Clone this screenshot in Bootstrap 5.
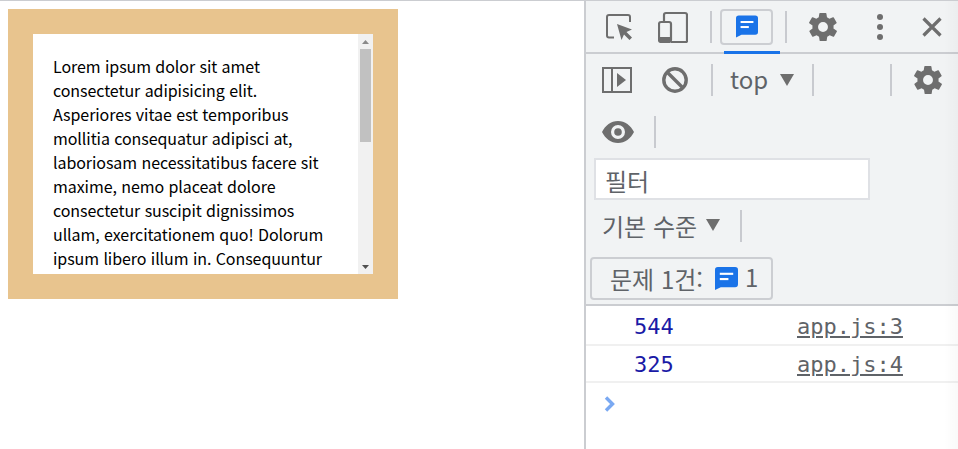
<!DOCTYPE html>
<html lang="ko">
<head>
<meta charset="utf-8">
<title>Console</title>
<link href="https://cdn.jsdelivr.net/npm/bootstrap@5.3.0/dist/css/bootstrap.min.css" rel="stylesheet">
<style>
html,body{height:449px;overflow:hidden;background:#fff}
.shell{height:449px;border-top:1px solid #cbcdd1}
.stage{width:584px;padding:8px 0 0 8px}
.outerbox{width:390px;height:290px;background:#e8c48e;padding:25px}
.innerbox{height:240px;background:#fff;overflow:hidden}
.lorem{width:325px;padding:20px 20px 0;font:16px/24px "Noto Sans CJK KR",sans-serif;letter-spacing:-.07px;color:#000;margin:0;flex:none}
.fakebar{width:15px;background:#f1f1f1;flex:none}
.bartop,.barbot{height:15px;color:#6e6e6e}
.barthumb{height:93px;background:#c1c1c1;margin:0 2px}
.dev{width:374px;border-left:2px solid #cbcdd1;background:#fff;font-family:"Noto Sans CJK KR",sans-serif;font-size:24px;color:#5f6368;position:relative}
.dev svg{display:block;flex:none}
.upper{background:#f1f3f4;height:303px;border-bottom:2px solid #cbcdd1;box-sizing:content-box}
.tb1{height:51px;border-bottom:2px solid #cbcdd1;position:relative;box-sizing:content-box;padding-left:20px}
.tb2{height:52px;padding-left:16px}
.tb3{height:52px;padding-left:16px}
.vsep{width:2px;height:32px;background:#c8cacf;flex:none}
.msgbtn{width:53px;height:36px;border:2px solid #ccced2;border-radius:4px;background:#f1f3f4}
.tabline{position:absolute;left:138px;bottom:-2px;width:56px;height:3px;background:#1a73e8}
.filterbox{width:276px;height:42px;margin:0 0 0 8px;background:#fff;border:2px solid #dfe1e5;line-height:42px;padding-left:9px}
.levels{height:42px;margin-top:5px;padding-left:16px}
.issuebtn{width:183px;height:43px;margin:10px 0 0 4px;border:2px solid #ccced2;border-radius:4px;padding-left:18px}
.logrow{height:37px;border-bottom:2px solid #f0f0f0;font:22px/37px "DejaVu Sans Mono",monospace;box-sizing:border-box}
.logval{margin-left:48px;width:163px;color:#1a1aa6}
.loglink{color:#5f6368;text-decoration:underline}
.edgeshade{position:absolute;top:0;right:0;bottom:0;width:14px;background:linear-gradient(to right,rgba(0,0,0,0),rgba(0,0,0,.025))}
</style>
</head>
<body class="m-0">
<div class="shell d-flex">
  <div class="stage">
    <div class="outerbox">
      <div class="innerbox d-flex">
        <p class="lorem">Lorem ipsum dolor sit amet consectetur adipisicing elit. Asperiores vitae est temporibus mollitia consequatur adipisci at, laboriosam necessitatibus facere sit maxime, nemo placeat dolore consectetur suscipit dignissimos ullam, exercitationem quo! Dolorum ipsum libero illum in. Consequuntur</p>
        <div class="fakebar d-flex flex-column">
          <div class="bartop d-flex align-items-center justify-content-center"><svg width="7" height="4" viewBox="0 0 7 4"><path d="M3.5 0L7 4H0z" fill="#8a8a8a"/></svg></div>
          <div class="barthumb"></div>
          <div class="flex-grow-1"></div>
          <div class="barbot d-flex align-items-center justify-content-center"><svg width="7" height="4" viewBox="0 0 7 4"><path d="M0 0H7L3.5 4z" fill="#505050"/></svg></div>
        </div>
      </div>
    </div>
  </div>
  <div class="dev flex-grow-1">
    <div class="upper">
      <div class="tb1 d-flex align-items-center">
        <svg width="26" height="26" viewBox="0 0 26 26" fill="none"><path d="M8 23.500H3A2 2 0 0 1 1 21.500V3a2 2 0 0 1 2-2h19a2 2 0 0 1 2 2v5" stroke="#6e6e6e" stroke-width="2"/><path d="M11 10l15 5.500-5.500 2.500 5.500 5.500-2.500 2.500-5.500-5.500-2.500 5.500z" fill="#6e6e6e"/></svg>
        <svg width="30" height="32" viewBox="0 0 30 32" fill="none" style="margin-left:26px"><path d="M6 10V4a2 2 0 0 1 2-2h19a2 2 0 0 1 2 2v26a1 1 0 0 1-1 1H13" stroke="#6e6e6e" stroke-width="2.200"/><rect x="1" y="11" width="12" height="20" rx="2" stroke="#6e6e6e" stroke-width="2.200"/><rect x="1" y="26" width="12" height="5" fill="#6e6e6e"/></svg>
        <div class="vsep" style="margin-left:22px"></div>
        <div class="msgbtn d-flex align-items-center justify-content-center" style="margin-left:8px"><svg width="22" height="23" viewBox="0 0 24 24"><path d="M3 0h18a3 3 0 0 1 3 3v15a3 3 0 0 1-3 3H6l-6 3V3a3 3 0 0 1 3-3z" fill="#1a73e8"/><rect x="5" y="6" width="14" height="2.200" fill="#fff"/><rect x="5" y="11.500" width="9" height="2.200" fill="#fff"/></svg></div>
        <div class="vsep" style="margin-left:12px"></div>
        <svg width="34" height="34" viewBox="0 0 24 24" style="margin-left:19px"><path fill="#6e6e6e" d="M19.4 13a7.500 7.500 0 0 0 0-2l2.100-1.600a.5.5 0 0 0 .1-.6l-2-3.500a.5.5 0 0 0-.6-.2l-2.500 1a7.300 7.300 0 0 0-1.700-1l-.4-2.600a.5.5 0 0 0-.5-.4h-4a.5.5 0 0 0-.5.4l-.4 2.600a7.300 7.300 0 0 0-1.700 1l-2.500-1a.5.5 0 0 0-.6.2l-2 3.500a.5.5 0 0 0 .1.6L4.600 11a7.500 7.500 0 0 0 0 2l-2.100 1.600a.5.5 0 0 0-.1.6l2 3.500a.5.5 0 0 0 .6.2l2.500-1a7.300 7.300 0 0 0 1.700 1l.4 2.600a.5.5 0 0 0 .5.4h4a.5.5 0 0 0 .5-.4l.4-2.600a7.300 7.300 0 0 0 1.700-1l2.500 1a.5.5 0 0 0 .6-.2l2-3.500a.5.5 0 0 0-.1-.6zM12 15.500a3.500 3.500 0 1 1 0-7 3.500 3.500 0 0 1 0 7z"/></svg>
        <svg width="8" height="28" viewBox="0 0 8 28" style="margin-left:36px"><circle cx="4" cy="4" r="3" fill="#6e6e6e"/><circle cx="4" cy="14" r="3" fill="#6e6e6e"/><circle cx="4" cy="24" r="3" fill="#6e6e6e"/></svg>
        <svg width="20" height="20" viewBox="0 0 20 20" style="margin-left:38px"><path d="M1.500 1.500l17 17M18.500 1.500l-17 17" stroke="#6e6e6e" stroke-width="3.200"/></svg>
        <div class="tabline"></div>
      </div>
      <div class="tb2 d-flex align-items-center">
        <svg width="30" height="28" viewBox="0 0 30 28" fill="none"><rect x="1" y="2" width="28" height="24" stroke="#6e6e6e" stroke-width="2"/><path d="M10 2v24" stroke="#6e6e6e" stroke-width="2"/><path d="M15 7l9 7-9 7z" fill="#6e6e6e"/></svg>
        <svg width="28" height="28" viewBox="0 0 28 28" fill="none" style="margin-left:29px"><circle cx="14" cy="14" r="11.200" stroke="#6e6e6e" stroke-width="3.400"/><path d="M6 6l16 16" stroke="#6e6e6e" stroke-width="3.400"/></svg>
        <div class="vsep" style="margin-left:22px"></div>
        <span style="margin-left:17px;line-height:1;margin-bottom:3px">top</span>
        <svg width="14" height="12" viewBox="0 0 14 12" style="margin-left:12px"><path d="M0 0h14L7 12z" fill="#6e6e6e"/></svg>
        <div class="vsep" style="margin-left:18px"></div>
        <div class="vsep" style="margin-left:76px"></div>
        <svg width="34" height="34" viewBox="0 0 24 24" style="margin-left:19px"><path fill="#6e6e6e" d="M19.4 13a7.500 7.500 0 0 0 0-2l2.100-1.600a.5.5 0 0 0 .1-.6l-2-3.500a.5.5 0 0 0-.6-.2l-2.500 1a7.300 7.300 0 0 0-1.700-1l-.4-2.600a.5.5 0 0 0-.5-.4h-4a.5.5 0 0 0-.5.4l-.4 2.600a7.300 7.300 0 0 0-1.700 1l-2.500-1a.5.5 0 0 0-.6.2l-2 3.500a.5.5 0 0 0 .1.6L4.600 11a7.500 7.500 0 0 0 0 2l-2.100 1.600a.5.5 0 0 0-.1.6l2 3.500a.5.5 0 0 0 .6.2l2.500-1a7.300 7.300 0 0 0 1.700 1l.4 2.600a.5.5 0 0 0 .5.4h4a.5.5 0 0 0 .5-.4l.4-2.600a7.300 7.300 0 0 0 1.700-1l2.500 1a.5.5 0 0 0 .6-.2l2-3.500a.5.5 0 0 0-.1-.6zM12 15.500a3.500 3.500 0 1 1 0-7 3.500 3.500 0 0 1 0 7z"/></svg>
      </div>
      <div class="tb3 d-flex align-items-center">
        <svg width="32" height="22" viewBox="0 0 32 22"><path fill-rule="evenodd" fill="#6e6e6e" d="M16 0C9 0 3.200 4.500 0 11c3.200 6.500 9 11 16 11s12.800-4.500 16-11C28.800 4.500 23 0 16 0zm0 18a7 7 0 1 1 0-14 7 7 0 0 1 0 14zm0-3.200a3.800 3.800 0 1 0 0-7.600 3.800 3.800 0 0 0 0 7.600z"/></svg>
        <div class="vsep" style="margin-left:20px"></div>
      </div>
      <div class="filterbox">필터</div>
      <div class="levels d-flex align-items-center">
        <span style="line-height:1">기본 수준</span>
        <svg width="14" height="12" viewBox="0 0 14 12" style="margin-left:9px;margin-bottom:3px"><path d="M0 0h14L7 12z" fill="#6e6e6e"/></svg>
        <div class="vsep" style="margin-left:20px"></div>
      </div>
      <div class="issuebtn d-flex align-items-center">
        <span style="line-height:1">문제 1건:</span>
        <svg width="23" height="23" viewBox="0 0 24 24" style="margin-left:12px"><path d="M3 0h18a3 3 0 0 1 3 3v15a3 3 0 0 1-3 3H6l-6 3V3a3 3 0 0 1 3-3z" fill="#1a73e8"/><rect x="5" y="6" width="14" height="2.200" fill="#fff"/><rect x="5" y="11.500" width="9" height="2.200" fill="#fff"/></svg>
        <span style="margin-left:7px;line-height:1;margin-bottom:3px">1</span>
      </div>
    </div>
    <div class="logrow d-flex" style="height:40px;padding-top:2px"><span class="logval">544</span><span class="loglink">app.js:3</span></div>
    <div class="logrow d-flex"><span class="logval">325</span><span class="loglink">app.js:4</span></div>
    <div class="d-flex" style="padding:13px 0 0 18px"><svg width="11" height="16" viewBox="0 0 11 16" fill="none"><path d="M2 1.500l6.500 6.500L2 14.500" stroke="#7aa9f2" stroke-width="3.400"/></svg></div>
    <div class="edgeshade"></div>
  </div>
</div>
<script src="https://cdn.jsdelivr.net/npm/bootstrap@5.3.0/dist/js/bootstrap.bundle.min.js"></script>
</body>
</html>
